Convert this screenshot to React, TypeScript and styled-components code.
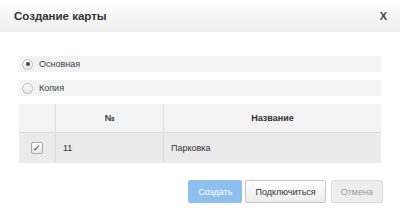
import React from 'react';
import styled, { createGlobalStyle } from 'styled-components';

const Global = createGlobalStyle`
  body {
    margin: 0;
    background: #fff;
    font-family: 'Liberation Sans', Arial, sans-serif;
  }
`;

const Dialog = styled.div`
  width: 400px;
  height: 215px;
  background: #fff;
  display: flex;
  flex-direction: column;
`;

const Header = styled.div`
  height: 32px;
  background: linear-gradient(#ffffff, #eeeeee);
  display: flex;
  align-items: center;
  justify-content: space-between;
  padding: 0 13px 0 14px;
  box-sizing: border-box;
`;

const Title = styled.span`
  font-size: 11.5px;
  font-weight: 700;
  color: #333;
`;

const Close = styled.span`
  font-size: 11px;
  font-weight: 700;
  color: #444;
`;

const Body = styled.div`
  padding: 24px 19px 0 19px;
  display: flex;
  flex-direction: column;
`;

const OptionRow = styled.label`
  height: 16px;
  background: #f3f3f3;
  display: flex;
  align-items: center;
  gap: 6px;
  padding-left: 3px;
  margin-bottom: 8px;
  font-size: 9px;
  color: #444;
`;

const Radio = styled.span<{ $checked?: boolean }>`
  width: 9px;
  height: 9px;
  border-radius: 50%;
  border: 1px solid #bbb;
  background: linear-gradient(#fff, #e8e8e8);
  display: flex;
  align-items: center;
  justify-content: center;
  &::after {
    content: '';
    width: 4px;
    height: 4px;
    border-radius: 50%;
    background: ${p => (p.$checked ? '#444' : 'transparent')};
  }
`;

const Table = styled.div`
  display: grid;
  grid-template-columns: 37px 108px 1fr;
  font-size: 9px;
  color: #333;
`;

const Cell = styled.div<{ $head?: boolean; $center?: boolean; $last?: boolean }>`
  height: ${p => (p.$head ? '29px' : '30px')};
  background: ${p => (p.$head ? '#f3f3f3' : '#ebebeb')};
  border-right: ${p => (p.$last ? 'none' : '1px solid #dcdcdc')};
  border-bottom: ${p => (p.$head ? '1px solid #dcdcdc' : 'none')};
  box-sizing: border-box;
  display: flex;
  align-items: center;
  justify-content: ${p => (p.$center ? 'center' : 'flex-start')};
  padding-left: ${p => (p.$center ? '0' : '7px')};
  font-weight: ${p => (p.$head ? 700 : 400)};
`;

const Check = styled.span`
  width: 10px;
  height: 10px;
  border: 1px solid #aaa;
  border-radius: 2px;
  background: linear-gradient(#fff, #e6e6e6);
  display: flex;
  align-items: center;
  justify-content: center;
  font-size: 9px;
  line-height: 1;
  color: #333;
`;

const Footer = styled.div`
  display: flex;
  justify-content: flex-end;
  gap: 3px;
  padding: 17px 17px 0 0;
`;

const Button = styled.button<{ $kind: 'primary' | 'default' | 'disabled' }>`
  height: 23px;
  padding: 0 9px;
  border-radius: 2px;
  font-family: 'Liberation Sans', Arial, sans-serif;
  font-size: 9px;
  cursor: pointer;
  border: 1px solid
    ${p => (p.$kind === 'primary' ? '#8ec0ee' : p.$kind === 'default' ? '#c8c8c8' : '#dedede')};
  background: ${p =>
    p.$kind === 'primary'
      ? '#8ec0ee'
      : p.$kind === 'default'
      ? 'linear-gradient(#ffffff, #ececec)'
      : '#eeeeee'};
  color: ${p => (p.$kind === 'primary' ? '#fff' : p.$kind === 'default' ? '#333' : '#999')};
  margin-left: ${p => (p.$kind === 'disabled' ? '2px' : '0')};
`;

const App = () => {
  return (
    <Dialog>
      <Global />
      <Header>
        <Title>Создание карты</Title>
        <Close>X</Close>
      </Header>
      <Body>
        <OptionRow>
          <Radio $checked />
          Основная
        </OptionRow>
        <OptionRow>
          <Radio />
          Копия
        </OptionRow>
        <Table>
          <Cell $head />
          <Cell $head $center>№</Cell>
          <Cell $head $center $last>Название</Cell>
          <Cell $center>
            <Check>✓</Check>
          </Cell>
          <Cell>11</Cell>
          <Cell $last>Парковка</Cell>
        </Table>
      </Body>
      <Footer>
        <Button $kind="primary">Создать</Button>
        <Button $kind="default">Подключиться</Button>
        <Button $kind="disabled">Отмена</Button>
      </Footer>
    </Dialog>
  );
};

export default App;
